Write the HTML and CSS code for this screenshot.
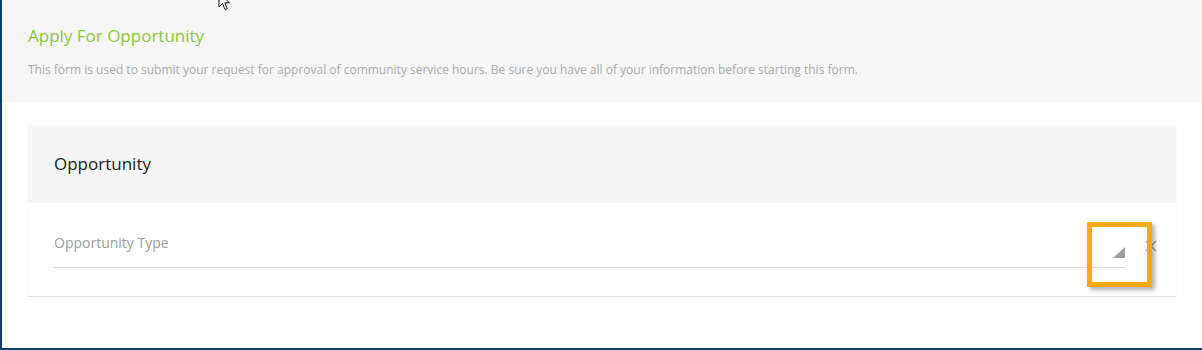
FILE: index.html
```html
<!DOCTYPE html>
<html lang="en">

<head>
  <meta charset="UTF-8">
  <meta name="viewport" content="width=device-width, initial-scale=1.0">
  <title>Apply For Opportunity</title>
  <link rel="stylesheet" href="styles.css">
</head>

<body>
  <div class="frame">
    <div class="page-header">
      <h1>Apply For Opportunity</h1>
      <p>This form is used to submit your request for approval of community service hours. Be sure you have all of your information before starting this form.</p>
    </div>

    <div class="content">
      <div class="card">
        <div class="card-header">
          <h2>Opportunity</h2>
        </div>
        <div class="card-body">
          <div class="field">
            <span class="field-label">Opportunity Type</span>
            <span class="caret"></span>
          </div>
          <svg class="clear" width="12" height="12" viewBox="0 0 12 12">
            <path d="M1 1 L11 11 M11 1 L1 11" stroke="#a3a7af" stroke-width="1.6" fill="none"/>
          </svg>
          <div class="highlight"></div>
        </div>
      </div>
    </div>

    <svg class="cursor" width="14" height="20" viewBox="0 0 14 20">
      <path d="M1 1 L1 15 L4.5 11.5 L7 17.5 L9.2 16.6 L6.8 10.8 L11.5 10.8 Z" fill="#fff" stroke="#111" stroke-width="1"/>
    </svg>
  </div>
</body>

</html>
```

FILE: styles.css
```css
* {
  margin: 0;
  padding: 0;
  box-sizing: border-box;
}

body {
  font-family: 'Open Sans', 'Noto Sans', sans-serif;
  background: #fff;
  overflow: hidden;
}

.frame {
  position: relative;
  height: 350px;
  border-left: 2px solid #0d3d68;
  border-bottom: 2px solid #0d3d68;
}

.page-header {
  background: #f6f6f6;
  height: 102px;
  padding: 24px 26px 0 26px;
}

.page-header h1 {
  font-size: 17px;
  font-weight: 400;
  line-height: 24px;
  color: #8cc43f;
}

.page-header p {
  margin-top: 14px;
  font-size: 12px;
  line-height: 16px;
  color: #a9a9a9;
}

.content {
  padding: 23px 26px 0 26px;
}

.card {
  background: #fff;
  border-bottom: 1px solid #e0e0e0;
  box-shadow: 0 0 1px rgba(0, 0, 0, 0.08);
}

.card-header {
  background: #f5f5f5;
  padding: 26px 26px;
}

.card-header h2 {
  font-size: 17px;
  font-weight: 400;
  line-height: 26px;
  color: #1a1a1a;
}

.card-body {
  position: relative;
  display: flex;
  align-items: flex-start;
  gap: 20px;
  padding: 31px 19px 28px 26px;
}

.field {
  flex: 1;
  display: flex;
  justify-content: space-between;
  align-items: flex-start;
  padding-bottom: 15px;
  border-bottom: 1px solid #dcdcdc;
}

.field-label {
  font-size: 14px;
  line-height: 18px;
  color: #9a9a9a;
}

.caret {
  width: 12px;
  height: 11px;
  margin-top: 13px;
  margin-bottom: -6px;
  background: #9e9e9e;
  clip-path: polygon(100% 0, 100% 100%, 0 100%);
}

.clear {
  margin-top: 6px;
  flex-shrink: 0;
}

.highlight {
  position: absolute;
  left: 1059px;
  top: 19px;
  width: 65px;
  height: 65px;
  border: 5px solid #f7a90d;
  box-shadow: 3px 3px 4px rgba(0, 0, 0, 0.3);
}

.cursor {
  position: absolute;
  left: 216px;
  top: -8px;
}
```
